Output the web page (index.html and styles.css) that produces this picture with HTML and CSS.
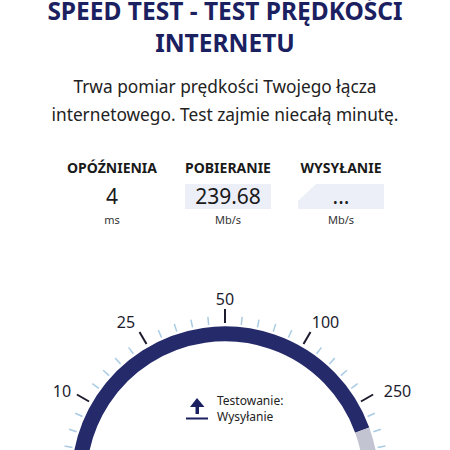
FILE: index.html
```html
<!DOCTYPE html>
<html lang="pl">
<head>
<meta charset="utf-8">
<link rel="stylesheet" href="styles.css">
</head>
<body>
<main class="page">
  <h1 class="title">SPEED TEST - TEST PRĘDKOŚCI INTERNETU</h1>
  <p class="lead">Trwa pomiar prędkości Twojego łącza internetowego. Test zajmie niecałą minutę.</p>
  <section class="stats">
    <div class="stat">
      <div class="stat-label">OPÓŹNIENIA</div>
      <div class="stat-value">4</div>
      <div class="stat-unit">ms</div>
    </div>
    <div class="stat">
      <div class="stat-label">POBIERANIE</div>
      <div class="stat-value stat-box">239.68</div>
      <div class="stat-unit">Mb/s</div>
    </div>
    <div class="stat">
      <div class="stat-label">WYSYŁANIE</div>
      <div class="stat-value stat-box stat-loading">...</div>
      <div class="stat-unit">Mb/s</div>
    </div>
  </section>
  <section class="gauge">
    <svg class="gauge-svg" width="450" height="200" viewBox="0 0 450 200">
      <g class="minor">
        <line x1="225" y1="44" x2="225" y2="36" transform="rotate(-132 225 200)"/>
        <line x1="225" y1="44" x2="225" y2="36" transform="rotate(-126 225 200)"/>
        <line x1="225" y1="44" x2="225" y2="36" transform="rotate(-114 225 200)"/>
        <line x1="225" y1="44" x2="225" y2="36" transform="rotate(-108 225 200)"/>
        <line x1="225" y1="44" x2="225" y2="36" transform="rotate(-102 225 200)"/>
        <line x1="225" y1="44" x2="225" y2="36" transform="rotate(-96 225 200)"/>
        <line x1="225" y1="44" x2="225" y2="36" transform="rotate(-84 225 200)"/>
        <line x1="225" y1="44" x2="225" y2="36" transform="rotate(-78 225 200)"/>
        <line x1="225" y1="44" x2="225" y2="36" transform="rotate(-72 225 200)"/>
        <line x1="225" y1="44" x2="225" y2="36" transform="rotate(-66 225 200)"/>
        <line x1="225" y1="44" x2="225" y2="36" transform="rotate(-54 225 200)"/>
        <line x1="225" y1="44" x2="225" y2="36" transform="rotate(-48 225 200)"/>
        <line x1="225" y1="44" x2="225" y2="36" transform="rotate(-42 225 200)"/>
        <line x1="225" y1="44" x2="225" y2="36" transform="rotate(-36 225 200)"/>
        <line x1="225" y1="44" x2="225" y2="36" transform="rotate(-24 225 200)"/>
        <line x1="225" y1="44" x2="225" y2="36" transform="rotate(-18 225 200)"/>
        <line x1="225" y1="44" x2="225" y2="36" transform="rotate(-12 225 200)"/>
        <line x1="225" y1="44" x2="225" y2="36" transform="rotate(-6 225 200)"/>
        <line x1="225" y1="44" x2="225" y2="36" transform="rotate(6 225 200)"/>
        <line x1="225" y1="44" x2="225" y2="36" transform="rotate(12 225 200)"/>
        <line x1="225" y1="44" x2="225" y2="36" transform="rotate(18 225 200)"/>
        <line x1="225" y1="44" x2="225" y2="36" transform="rotate(24 225 200)"/>
        <line x1="225" y1="44" x2="225" y2="36" transform="rotate(36 225 200)"/>
        <line x1="225" y1="44" x2="225" y2="36" transform="rotate(42 225 200)"/>
        <line x1="225" y1="44" x2="225" y2="36" transform="rotate(48 225 200)"/>
        <line x1="225" y1="44" x2="225" y2="36" transform="rotate(54 225 200)"/>
        <line x1="225" y1="44" x2="225" y2="36" transform="rotate(66 225 200)"/>
        <line x1="225" y1="44" x2="225" y2="36" transform="rotate(72 225 200)"/>
        <line x1="225" y1="44" x2="225" y2="36" transform="rotate(78 225 200)"/>
        <line x1="225" y1="44" x2="225" y2="36" transform="rotate(84 225 200)"/>
        <line x1="225" y1="44" x2="225" y2="36" transform="rotate(96 225 200)"/>
        <line x1="225" y1="44" x2="225" y2="36" transform="rotate(102 225 200)"/>
        <line x1="225" y1="44" x2="225" y2="36" transform="rotate(108 225 200)"/>
        <line x1="225" y1="44" x2="225" y2="36" transform="rotate(114 225 200)"/>
        <line x1="225" y1="44" x2="225" y2="36" transform="rotate(126 225 200)"/>
        <line x1="225" y1="44" x2="225" y2="36" transform="rotate(132 225 200)"/>
      </g>
      <g class="major">
        <line x1="225" y1="43" x2="225" y2="29" transform="rotate(-120 225 200)"/>
        <line x1="225" y1="43" x2="225" y2="29" transform="rotate(-90 225 200)"/>
        <line x1="225" y1="43" x2="225" y2="29" transform="rotate(-60 225 200)"/>
        <line x1="225" y1="43" x2="225" y2="29" transform="rotate(-30 225 200)"/>
        <line x1="225" y1="43" x2="225" y2="29"/>
        <line x1="225" y1="43" x2="225" y2="29" transform="rotate(30 225 200)"/>
        <line x1="225" y1="43" x2="225" y2="29" transform="rotate(60 225 200)"/>
        <line x1="225" y1="43" x2="225" y2="29" transform="rotate(90 225 200)"/>
        <line x1="225" y1="43" x2="225" y2="29" transform="rotate(120 225 200)"/>
      </g>
      <g class="scale">
        <text x="62" y="117">10</text>
        <text x="126" y="48">25</text>
        <text x="225" y="25">50</text>
        <text x="325.5" y="48">100</text>
        <text x="397.5" y="117">250</text>
      </g>
      <path class="arc-fill" d="M121.8 303.2 A146 146 0 1 1 362.2 150.1"/>
      <path class="arc-rest" d="M362.2 150.1 A146 146 0 0 1 328.2 303.2"/>
    </svg>
    <div class="gauge-status">
      <svg class="status-icon" width="24" height="24" viewBox="0 0 24 24">
        <path d="M12 1 L19.5 10 L14 10 L14 17 L10.5 17 L10.5 10 L5 10 Z"/>
        <rect x="1" y="20.5" width="22" height="2"/>
      </svg>
      <div class="status-text">Testowanie:<br>Wysyłanie</div>
    </div>
  </section>
</main>
</body>
</html>
```

FILE: styles.css
```css
html, body {
  margin: 0;
  padding: 0;
  background: #ffffff;
}

.page {
  width: 450px;
  height: 450px;
  overflow: hidden;
  font-family: "Noto Sans", "Liberation Sans", sans-serif;
  color: #222222;
}

.title {
  margin: -5px 0 0;
  padding: 0 30px;
  text-align: center;
  font-size: 24.5px;
  line-height: 32px;
  font-weight: 700;
  color: #1b2160;
  letter-spacing: 0;
}

.lead {
  margin: 14px 0 0;
  padding: 0 30px;
  text-align: center;
  font-size: 17.3px;
  line-height: 28px;
  color: #222222;
}

.stats {
  margin: 30px auto 0;
  width: 345px;
  display: grid;
  grid-template-columns: 119px 113px 113px;
}

.stat {
  display: flex;
  flex-direction: column;
  align-items: center;
}

.stat-label {
  font-size: 14px;
  line-height: 18px;
  font-weight: 700;
  color: #1a1a1a;
}

.stat-value {
  margin-top: 7px;
  width: 86px;
  height: 25px;
  font-size: 21px;
  line-height: 25px;
  text-align: center;
  color: #1a1a1a;
}

.stat-box {
  background: #eceef8;
}

.stat-loading {
  clip-path: polygon(18px 0, 100% 0, 100% 100%, 0 100%, 0 17px);
}

.stat-unit {
  margin-top: 4px;
  font-size: 11px;
  line-height: 14px;
  color: #333333;
}

.gauge {
  position: relative;
  margin-top: 53px;
  height: 200px;
}

.gauge-svg {
  display: block;
}

.minor line {
  stroke: #a9cbe3;
  stroke-width: 1.5;
}

.major line {
  stroke: #1c1c2e;
  stroke-width: 2;
}

.scale text {
  font-family: "Noto Sans", "Liberation Sans", sans-serif;
  font-size: 16px;
  fill: #1c1c2e;
  text-anchor: middle;
}

.arc-fill {
  fill: none;
  stroke: #252a6a;
  stroke-width: 15;
}

.arc-rest {
  fill: none;
  stroke: #c3c4d2;
  stroke-width: 15;
}

.gauge-status {
  position: absolute;
  left: 185px;
  top: 113px;
  display: flex;
  align-items: center;
  gap: 8px;
}

.status-icon {
  display: block;
  fill: #1b2160;
}

.status-text {
  font-size: 12px;
  line-height: 16px;
  color: #222222;
}
```
